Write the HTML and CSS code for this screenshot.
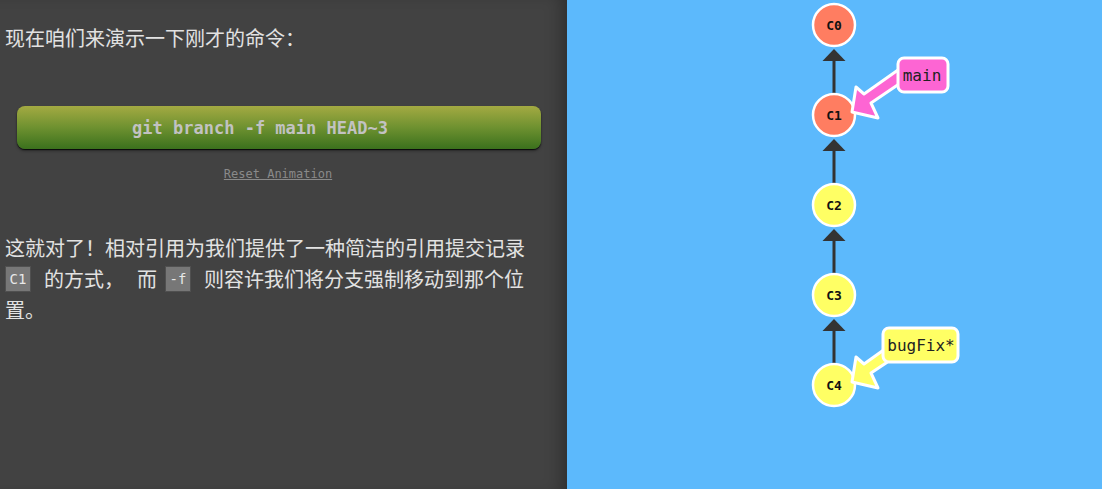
FILE: index.html
```html
<!DOCTYPE html>
<html lang="zh">
<head>
<meta charset="utf-8">
<title>git branch -f</title>
<link rel="stylesheet" href="styles.css">
</head>
<body>
<div class="app">
  <div class="left">
    <p class="para first">现在咱们来演示一下刚才的命令：</p>
    <div class="cmd">git branch -f main HEAD~3</div>
    <div class="reset"><span class="reset-link">Reset Animation</span></div>
    <p class="para second">这就对了！相对引用为我们提供了一种简洁的引用提交记录 <code class="code">C1</code> 的方式， 而 <code class="code code-tight">-f</code> 则容许我们将分支强制移动到那个位置。</p>
  </div>
  <div class="right">
    <svg class="graph" width="535" height="489" viewBox="567 0 535 489" xmlns="http://www.w3.org/2000/svg">
      <g class="edges">
        <line x1="834" y1="93" x2="834" y2="60" />
        <polygon points="834,49 822.5,61 845.5,61" />
        <line x1="834" y1="183" x2="834" y2="150" />
        <polygon points="834,139 822.5,151 845.5,151" />
        <line x1="834" y1="273" x2="834" y2="240" />
        <polygon points="834,229 822.5,241 845.5,241" />
        <line x1="834" y1="363" x2="834" y2="330" />
        <polygon points="834,319 822.5,331 845.5,331" />
      </g>
      <g class="nodes">
        <circle class="n-main" cx="834" cy="25" r="21" />
        <text x="834" y="29.5">C0</text>
        <circle class="n-main" cx="834" cy="115" r="21" />
        <text x="834" y="119.5">C1</text>
        <circle class="n-fix" cx="834" cy="205" r="21" />
        <text x="834" y="209.5">C2</text>
        <circle class="n-fix" cx="834" cy="295" r="21" />
        <text x="834" y="299.5">C3</text>
        <circle class="n-fix" cx="834" cy="385" r="21" />
        <text x="834" y="389.5">C4</text>
      </g>
      <g class="label">
        <polygon class="arrow-main" points="852,112 856,87 864,94 898,70 902,82 871,103 878,118" />
        <rect class="box-main" x="898" y="58" width="50" height="34" rx="6" />
        <text x="922" y="81">main</text>
      </g>
      <g class="label">
        <polygon class="arrow-fix" points="852,382 856,357 864,364 885,349 889,361 871,373 878,388" />
        <rect class="box-fix" x="883" y="328" width="75" height="34" rx="6" />
        <text x="921" y="351">bugFix*</text>
      </g>
    </svg>
  </div>
</div>
</body>
</html>
```

FILE: styles.css
```css
html, body {
  margin: 0;
  padding: 0;
}

body {
  width: 1102px;
  height: 489px;
  overflow: hidden;
  font-family: "Noto Sans CJK SC", "DejaVu Sans", sans-serif;
}

.app {
  display: flex;
  width: 1102px;
  height: 489px;
}

.left {
  width: 567px;
  flex: 0 0 567px;
  box-sizing: border-box;
  height: 489px;
  background: #424242;
  padding: 0 20px 0 5px;
  box-shadow: inset -14px 0 16px -8px rgba(0, 0, 0, 0.28);
  color: #e2e2e2;
}

.para {
  margin: 0;
  font-size: 20px;
  line-height: 31px;
}

.first {
  padding-top: 22px;
}

.cmd {
  margin: 53px 6px 0 12px;
  padding-right: 38px;
  height: 43px;
  border-radius: 8px;
  background: linear-gradient(to bottom, #a4aa42 0%, #6e9130 50%, #3b711d 100%);
  box-shadow: 0 1px 1px rgba(0, 0, 0, 0.8), 0 2px 3px rgba(0, 0, 0, 0.35);
  display: flex;
  align-items: center;
  justify-content: center;
  font-family: "DejaVu Sans Mono", monospace;
  font-weight: bold;
  font-size: 17px;
  color: #c2c2c2;
}

.reset {
  margin-top: 14px;
  height: 16px;
  line-height: 16px;
  text-align: center;
  padding-left: 4px;
}

.reset-link {
  font-family: "DejaVu Sans Mono", monospace;
  font-size: 12px;
  color: #8a8a8a;
  text-decoration: underline;
}

.second {
  margin-top: 53px;
  word-spacing: 8.5px;
}

.code {
  display: inline-block;
  box-sizing: border-box;
  width: 26px;
  height: 26px;
  line-height: 24px;
  padding: 0;
  text-align: center;
  background: #777777;
  border: 1px solid #505050;
  font-family: "DejaVu Sans Mono", monospace;
  font-size: 14px;
  color: #e8e8e8;
  word-spacing: 0;
  vertical-align: 3px;
}

.code-tight {
  margin-left: -5px;
}

.right {
  flex: 1 1 auto;
  height: 489px;
  background: #5cb9fc;
}

.graph {
  display: block;
}

.edges line {
  stroke: #333333;
  stroke-width: 3;
}

.edges polygon {
  fill: #333333;
}

.nodes circle {
  stroke: #ffffff;
  stroke-width: 2.5;
}

.n-main {
  fill: #ff7d61;
}

.n-fix {
  fill: #ffff64;
}

.nodes text {
  font-family: "DejaVu Sans Mono", monospace;
  font-weight: bold;
  font-size: 13px;
  fill: #111111;
  text-anchor: middle;
}

.label polygon,
.label rect {
  stroke: #ffffff;
  stroke-width: 3;
  stroke-linejoin: round;
}

.arrow-main,
.box-main {
  fill: #fd65d3;
}

.arrow-fix,
.box-fix {
  fill: #ffff64;
}

.label text {
  font-family: "DejaVu Sans Mono", monospace;
  font-size: 16px;
  fill: #222222;
  text-anchor: middle;
}
```
